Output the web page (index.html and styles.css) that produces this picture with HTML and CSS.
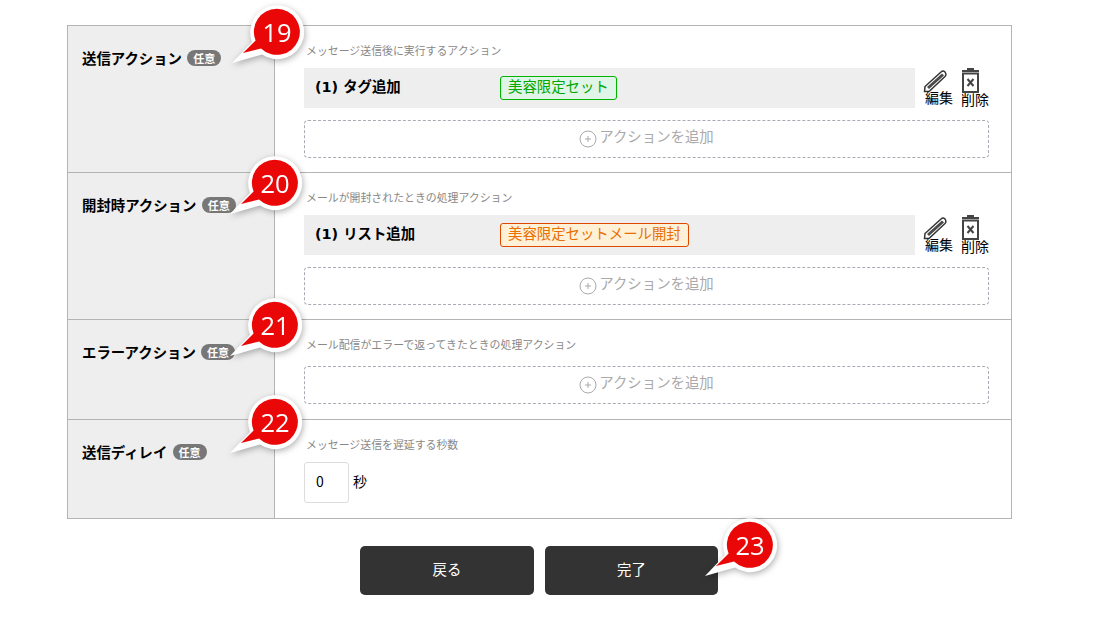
FILE: index.html
```html
<!DOCTYPE html>
<html lang="ja">
<head>
    <meta charset="utf-8">
    <title>アクション設定</title>
    <link rel="stylesheet" href="styles.css">
</head>
<body>
    <svg class="defs" width="0" height="0">
        <defs>
            <g id="bubble">
                <path class="bubble-edge" d="M7 58 L27 37 A27 27 0 1 1 37 49.500 Z"/>
                <path class="bubble-fill" d="M18 48 L30.600 35.600 A23 23 0 1 1 36 43.500 Z"/>
            </g>
            <g id="plus">
                <circle cx="9" cy="9" r="8" fill="none" stroke="#aaa" stroke-width="1"/>
                <path d="M9 6v6M6 9h6" stroke="#aaa" stroke-width="1"/>
            </g>
            <g id="pencil">
                <path d="M1.500 21.500 L2 16.500 L18 2 Q20 0 22 2 L22.500 3 Q23.500 5 22 6.500 L6 21.500 Z" fill="#fff" stroke="#333" stroke-width="1.500"/>
                <path d="M4 17 L19 3.500 L21 5.500 L6 19 Z" fill="#4a4a4a"/>
            </g>
            <g id="trash">
                <path d="M6 0h7v2h5v2H1V2h5z" fill="#444"/>
                <path d="M2 5.500h15v18.500h-15z" fill="#fff" stroke="#444" stroke-width="2"/>
                <path d="M6.500 11l6 7M12.500 11l-6 7" stroke="#444" stroke-width="2"/>
            </g>
        </defs>
    </svg>

    <div class="wrap">
        <div class="form-table">
            <div class="row">
                <div class="label">送信アクション <span class="optional">任意</span></div>
                <div class="body">
                    <p class="desc">メッセージ送信後に実行するアクション</p>
                    <div class="action">
                        <div class="action-bar">
                            <span class="action-name">(1) タグ追加</span>
                            <span class="tag tag-green">美容限定セット</span>
                        </div>
                        <div class="tool tool-edit"><svg width="26" height="24" viewBox="0 0 26 24"><use href="#pencil"/></svg><span>編集</span></div>
                        <div class="tool tool-del"><svg width="19" height="25" viewBox="0 0 19 25"><use href="#trash"/></svg><span>削除</span></div>
                    </div>
                    <div class="add"><svg width="18" height="18" viewBox="0 0 18 18"><use href="#plus"/></svg>アクションを追加</div>
                </div>
                <svg class="callout callout-19" width="84" height="66" viewBox="0 0 84 66"><use href="#bubble"/><text x="52" y="36.500">19</text></svg>
            </div>

            <div class="row">
                <div class="label">開封時アクション <span class="optional">任意</span></div>
                <div class="body">
                    <p class="desc">メールが開封されたときの処理アクション</p>
                    <div class="action">
                        <div class="action-bar">
                            <span class="action-name">(1) リスト追加</span>
                            <span class="tag tag-orange">美容限定セットメール開封</span>
                        </div>
                        <div class="tool tool-edit"><svg width="26" height="24" viewBox="0 0 26 24"><use href="#pencil"/></svg><span>編集</span></div>
                        <div class="tool tool-del"><svg width="19" height="25" viewBox="0 0 19 25"><use href="#trash"/></svg><span>削除</span></div>
                    </div>
                    <div class="add"><svg width="18" height="18" viewBox="0 0 18 18"><use href="#plus"/></svg>アクションを追加</div>
                </div>
                <svg class="callout callout-20" width="84" height="66" viewBox="0 0 84 66"><use href="#bubble"/><text x="52" y="36.500">20</text></svg>
            </div>

            <div class="row">
                <div class="label">エラーアクション <span class="optional">任意</span></div>
                <div class="body body-short">
                    <p class="desc desc-solo">メール配信がエラーで返ってきたときの処理アクション</p>
                    <div class="add"><svg width="18" height="18" viewBox="0 0 18 18"><use href="#plus"/></svg>アクションを追加</div>
                </div>
                <svg class="callout callout-21" width="84" height="66" viewBox="0 0 84 66"><use href="#bubble"/><text x="52" y="36.500">21</text></svg>
            </div>

            <div class="row">
                <div class="label">送信ディレイ <span class="optional">任意</span></div>
                <div class="body body-short">
                    <p class="desc">メッセージ送信を遅延する秒数</p>
                    <div class="delay">
                        <div class="delay-input">0</div>
                        <span>秒</span>
                    </div>
                </div>
                <svg class="callout callout-22" width="84" height="66" viewBox="0 0 84 66"><use href="#bubble"/><text x="52" y="36.500">22</text></svg>
            </div>
        </div>

        <div class="buttons">
            <button class="btn btn-back">戻る</button>
            <div class="btn-wrap">
                <button class="btn btn-done">完了</button>
                <svg class="callout callout-23" width="84" height="66" viewBox="0 0 84 66"><use href="#bubble"/><text x="52" y="36.500">23</text></svg>
            </div>
        </div>
    </div>
</body>
</html>
```

FILE: styles.css
```css
body {
    margin: 0;
    background: #fff;
    color: #000;
    font-family: "Noto Sans CJK JP", "Noto Sans", sans-serif;
    font-size: 14px;
}
.defs { position: absolute; }

.wrap {
    width: 945px;
    margin: 25px 0 0 67px;
}
.form-table {
    border: 1px solid #b4b4b4;
}
.row {
    position: relative;
    display: grid;
    grid-template-columns: 207px 1fr;
    border-bottom: 1px solid #b4b4b4;
}
.row:last-child { border-bottom: none; }

.label {
    background: #eee;
    border-right: 1px solid #b4b4b4;
    padding: 22px 0 0 14px;
    font-size: 14.4px;
    font-weight: bold;
    line-height: 20px;
}
.optional {
    display: inline-block;
    width: 34px;
    height: 16px;
    margin-left: 2px;
    border-radius: 8px;
    background: #777;
    color: #fff;
    font-size: 11px;
    font-weight: bold;
    line-height: 16px;
    text-align: center;
    vertical-align: 1px;
}

.body { padding: 16px 22px 14px 29px; }
.body-short { padding-bottom: 15px; }
.desc {
    margin: 0 0 10px;
    padding-left: 2px;
    color: #888;
    font-size: 10.9px;
    line-height: 16px;
}
.desc-solo { margin-bottom: 14px; }

.action {
    display: flex;
    margin-bottom: 12px;
}
.action-bar {
    display: flex;
    align-items: center;
    width: 611px;
    height: 40px;
    background: #eee;
}
.action-name {
    width: 196px;
    box-sizing: border-box;
    padding: 0 0 6px 11px;
    font-family: "DejaVu Sans", "Noto Sans CJK JP", sans-serif;
    font-size: 14.4px;
    font-weight: bold;
}
.tag {
    height: 22px;
    padding: 0 7px;
    border: 1px solid;
    border-radius: 3px;
    font-size: 14.4px;
    line-height: 18px;
}
.tag-green { border-color: #00b400; background: #e0f5e8; color: #00a800; }
.tag-orange { border-color: #e04800; background: #fff0d8; color: #e87000; }

.tool {
    display: flex;
    flex-direction: column;
    box-sizing: border-box;
    height: 40px;
    font-size: 14px;
    line-height: 16px;
    white-space: nowrap;
}
.tool svg { display: block; flex: none; }
.tool-edit { width: 30px; margin-left: 8px; padding-top: 2px; }
.tool-edit span { margin: -5px 0 0 2px; }
.tool-del { width: 28px; margin-left: 8px; }
.tool-del span { margin-top: -2px; }

.add {
    display: flex;
    align-items: center;
    justify-content: center;
    height: 38px;
    box-sizing: border-box;
    padding-bottom: 7px;
    border: 1px dashed #aaaab4;
    border-radius: 4px;
    color: #aaa;
    font-size: 14.4px;
}
.add svg { margin: 7px 2px 0 0; }

.delay {
    display: flex;
    align-items: center;
}
.delay-input {
    width: 45px;
    height: 41px;
    box-sizing: border-box;
    padding-left: 11px;
    border: 1px solid #ddd;
    border-radius: 3px;
    font-size: 14px;
    line-height: 37px;
}
.delay span { margin: -3px 0 0 4px; font-size: 14px; }

.buttons {
    display: flex;
    gap: 11px;
    margin-top: 27px;
    padding-left: 293px;
}
.btn {
    height: 49px;
    padding: 0 0 5px;
    border: none;
    border-radius: 5px;
    background: #333;
    color: #fff;
    font-family: inherit;
    font-size: 14.4px;
}
.btn-back { width: 174px; }
.btn-done { width: 173px; }
.btn-wrap { position: relative; }

/* 番号の吹き出し */
.callout {
    position: absolute;
    overflow: visible;
    filter: drop-shadow(1px 2px 3px rgba(0,0,0,0.3));
}
.callout-19 { top: -21px; left: 157px; }
.callout-20 { top: -17px; left: 155px; }
.callout-21 { top: -22px; left: 155px; }
.callout-22 { top: -25px; left: 155px; }
.callout-23 { top: -28px; left: 153px; }
.bubble-edge { fill: #fff; }
.bubble-fill { fill: #e90707; }
.callout text {
    fill: #fff;
    font-family: "Open Sans", sans-serif;
    font-size: 25.5px;
    text-anchor: middle;
}
```
